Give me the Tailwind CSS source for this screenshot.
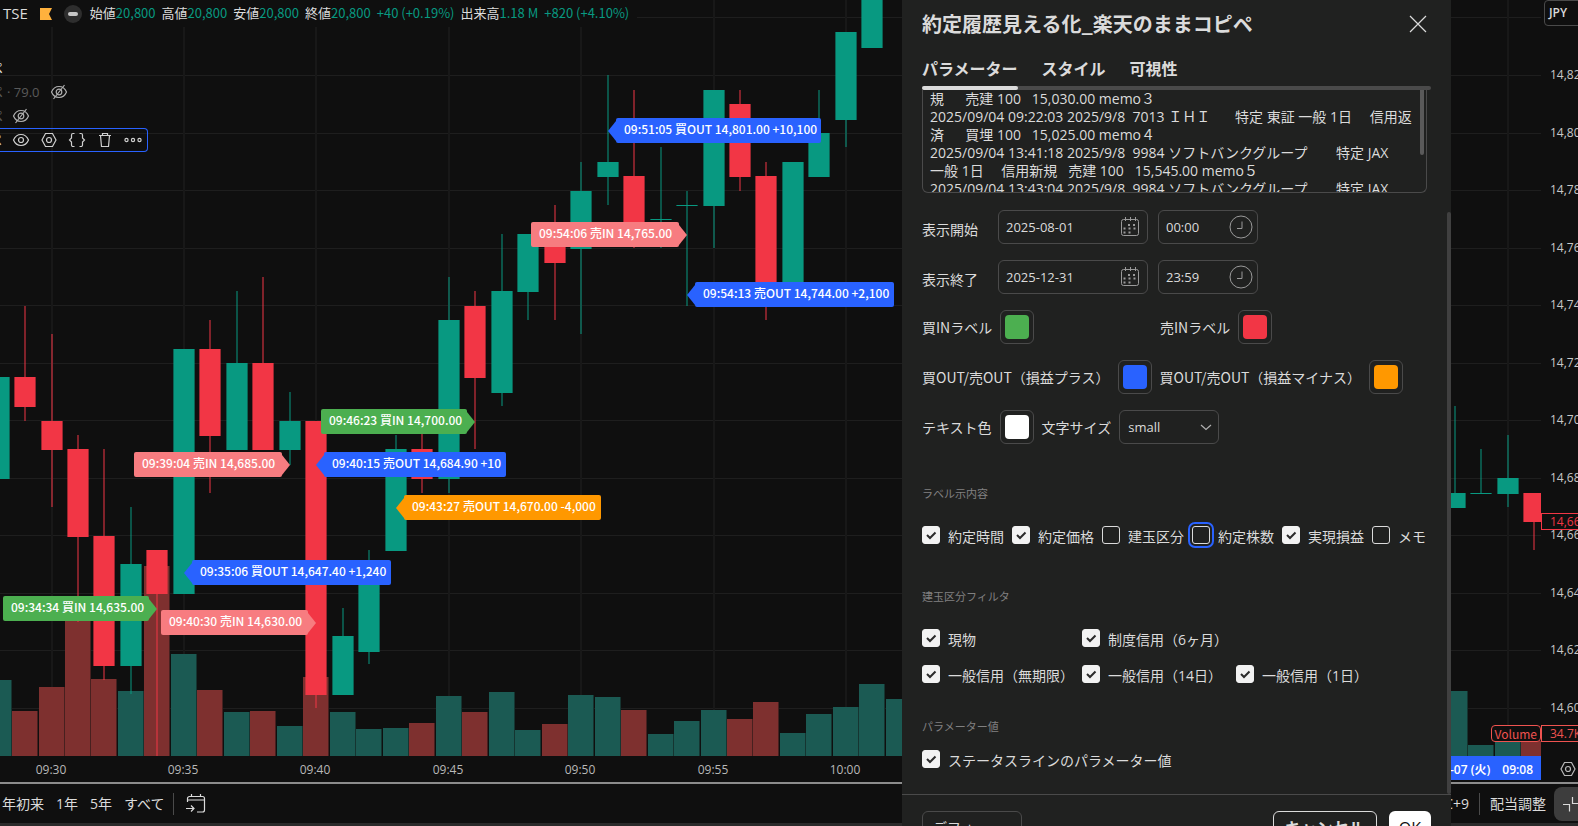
<!DOCTYPE html>
<html lang="ja">
<head>
  <meta charset="UTF-8" />
  <meta name="viewport" content="width=device-width, initial-scale=1.0"/>
  <title>チャート</title>
  <script src="https://cdn.jsdelivr.net/npm/@tailwindcss/browser@4"></script>
</head>
<body class="relative flex h-screen flex-col overflow-hidden bg-[#0f0f0f] font-['Open_Sans','Noto_Sans_CJK_JP',sans-serif] text-sm text-[#dbdbdb]">

  <!-- Chart + price axis -->
  <div class="flex min-h-0 grow">
    <main class="relative min-w-0 grow overflow-hidden">
      <svg id="chart" class="block h-full w-full font-['Noto_Sans_CJK_JP',sans-serif]"></svg>

      <!-- Legend -->
      <div class="absolute left-0 top-0 flex flex-col items-start">
        <div class="flex h-[27px] items-center bg-[#0f0f0f] pl-[3px] pr-2 text-[13px] whitespace-nowrap">
          <span class="text-[15px]">TSE</span>
          <svg class="ml-3 h-3 w-3" viewBox="0 0 12 12"><path d="M0 0h12l-3 6 3 6H0z" fill="#ffb13d"/></svg>
          <span class="ml-3 flex h-[18px] w-[18px] items-center justify-center rounded-full bg-[#2e2e2e]"><span class="h-1 w-2.5 rounded-sm bg-[#c8c8c8]"></span></span>
          <div class="ml-2 flex gap-1.5 font-['Noto_Sans_CJK_JP',sans-serif]">
            <span>始値<span class="text-[#089981]">20,800</span></span>
            <span>高値<span class="text-[#089981]">20,800</span></span>
            <span>安値<span class="text-[#089981]">20,800</span></span>
            <span>終値<span class="text-[#089981]">20,800</span></span>
            <span class="text-[#089981]">+40 (+0.19%)</span>
            <span>出来高<span class="text-[#089981]">1.18 M</span></span>
            <span class="text-[#089981]">+820 (+4.10%)</span>
          </div>
        </div>
        <div class="mt-[29px] flex h-6 items-center"><span class="flex w-[3px] justify-end overflow-hidden">ペ</span></div>
        <div class="flex h-6 items-center text-[#5a5a5a]">
          <span class="flex w-[3px] justify-end overflow-hidden">ペ</span>
          <span class="ml-1 text-[13px]">· 79.0</span>
          <button class="ml-2.5 text-[#b0b0b0]" aria-label="表示"><svg class="h-[18px] w-[18px]" viewBox="0 0 18 18" fill="none" stroke="currentColor" stroke-width="1.2"><path d="M1.5 9C3 5.500 5.500 3.500 9 3.500S15 5.500 16.500 9C15 12.500 12.500 14.500 9 14.500S3 12.500 1.500 9z"/><circle cx="9" cy="9" r="2.800"/><path d="M3.500 16 14.500 2"/></svg></button>
        </div>
        <div class="flex h-6 items-center text-[#5a5a5a]">
          <span class="flex w-[3px] justify-end overflow-hidden">ペ</span>
          <button class="ml-[9px] text-[#b0b0b0]" aria-label="表示"><svg class="h-[18px] w-[18px]" viewBox="0 0 18 18" fill="none" stroke="currentColor" stroke-width="1.2"><path d="M1.5 9C3 5.500 5.500 3.500 9 3.500S15 5.500 16.500 9C15 12.500 12.500 14.500 9 14.500S3 12.500 1.500 9z"/><circle cx="9" cy="9" r="2.800"/><path d="M3.500 16 14.500 2"/></svg></button>
        </div>
        <div class="flex h-6 items-center gap-2.5 rounded-r border border-l-0 border-[#2962ff] pr-[5px] text-[#cfcfcf]">
          <span class="flex w-[2px] justify-end overflow-hidden">ペ</span>
          <button aria-label="非表示"><svg class="h-[18px] w-[18px]" viewBox="0 0 18 18" fill="none" stroke="currentColor" stroke-width="1.2"><path d="M1.5 9C3 5.500 5.500 3.500 9 3.500S15 5.500 16.500 9C15 12.500 12.500 14.500 9 14.500S3 12.500 1.500 9z"/><circle cx="9" cy="9" r="2.500"/></svg></button>
          <button aria-label="設定"><svg class="h-[18px] w-[18px]" viewBox="0 0 18 18" fill="none" stroke="currentColor" stroke-width="1.2"><path d="M5.500 2.500h7L16 9l-3.500 6.500h-7L2 9z"/><circle cx="9" cy="9" r="2.500"/></svg></button>
          <button aria-label="ソースコード"><svg class="h-[18px] w-[18px]" viewBox="0 0 18 18" fill="none" stroke="currentColor" stroke-width="1.2"><path d="M6.500 2.500H5A1.500 1.500 0 0 0 3.500 4v3L1.500 9l2 2v3A1.500 1.500 0 0 0 5 15.500h1.500M11.500 2.500H13A1.500 1.500 0 0 1 14.500 4v3l2 2-2 2v3a1.500 1.500 0 0 1-1.500 1.500h-1.500"/></svg></button>
          <button aria-label="削除"><svg class="h-[18px] w-[18px]" viewBox="0 0 18 18" fill="none" stroke="currentColor" stroke-width="1.2"><path d="M3 4.500h12M6.500 4.500v-2h5v2M4.500 4.500l1 11h7l1-11"/></svg></button>
          <button aria-label="その他"><svg class="h-[18px] w-[18px]" viewBox="0 0 18 18" fill="none" stroke="currentColor" stroke-width="1.2"><circle cx="2.500" cy="9" r="1.600"/><circle cx="9" cy="9" r="1.600"/><circle cx="15.500" cy="9" r="1.600"/></svg></button>
        </div>
      </div>

      <span class="absolute bottom-3.5 right-0 h-[17px] rounded-sm border border-[#ef5350] bg-[#0f0f0f] px-[3px] font-['Noto_Sans_CJK_JP',sans-serif] text-xs leading-[15px] text-[#ef5350]">Volume</span>
    </main>
    <aside class="relative w-[37px] shrink-0 overflow-hidden">
      <svg id="prices" class="block h-full w-full"></svg>
      <button class="absolute left-[3px] top-0 h-[26px] w-16 rounded border border-[#4a4a4a] bg-[#0f0f0f] pl-1 text-left text-xs font-semibold">JPY</button>
      <span class="absolute left-0 top-[513px] h-[17px] w-16 border border-[#f23645] bg-[#0f0f0f] pl-2 text-xs leading-[15px] text-[#f23645]">14,665</span>
      <span class="absolute bottom-3.5 left-0 h-[17px] w-16 border border-[#ef5350] bg-[#0f0f0f] pl-2 text-xs leading-[15px] text-[#ef5350]">34.7K</span>
    </aside>
  </div>

  <!-- Time axis -->
  <div class="flex h-[26px] shrink-0 text-xs">
    <div class="relative min-w-0 grow">
      <svg id="times" class="block h-full w-full"></svg>
      <span class="absolute right-0 top-0 flex h-6 gap-3 bg-[#2962ff] pl-6 pr-2 font-semibold leading-[28px] text-white whitespace-pre"><span>2025-10-07 (火)</span><span>09:08</span></span>
    </div>
    <button class="flex w-[37px] items-center justify-center pl-4" aria-label="軸の設定"><svg class="h-4 w-4 text-[#b8b8b8]" viewBox="0 0 16 16" fill="none" stroke="currentColor" stroke-width="1.200"><path d="M4.500 1.500h7L15 8l-3.500 6.500h-7L1 8z"/><circle cx="8" cy="8" r="2.500"/></svg></button>
  </div>

  <!-- Bottom toolbar -->
  <div class="flex h-[44px] shrink-0 items-center overflow-hidden border-t-2 border-b-3 border-t-[#8c8c8c] border-b-[#2a2a2a] pl-0.5">
    <button>年初来</button>
    <button class="ml-3">1年</button>
    <button class="ml-3">5年</button>
    <button class="ml-3">すべて</button>
    <span class="ml-2 h-[22px] w-px bg-[#4a4a4a]"></span>
    <button class="ml-3" aria-label="移動"><svg class="h-5 w-5" viewBox="0 0 20 20" fill="none" stroke="currentColor" stroke-width="1.200"><path d="M1.500 8V4.500a2 2 0 0 1 2-2h13a2 2 0 0 1 2 2V16a2 2 0 0 1-2 2H11M1.500 6h17M5.500 0v3M14.500 0v3M0 14.500h8M5 11.500l3 3-3 3"/></svg></button>
    <div class="ml-auto flex items-center">
      <button>UTC+9</button>
      <span class="ml-2.5 h-[22px] w-px bg-[#4a4a4a]"></span>
      <button class="ml-2.5">配当調整</button>
      <button class="ml-2 flex h-[34px] w-6 items-center justify-end rounded-l-lg bg-[#3d3d3d]" aria-label="スケール"><svg class="h-[18px] w-4" viewBox="0 0 16 18" fill="none" stroke="currentColor" stroke-width="1.200"><path d="M1 9.500h6.500v7M10.500 2v6.500H16"/></svg></button>
    </div>
  </div>

  <!-- Settings dialog -->
  <div role="dialog" aria-labelledby="dialogTitle" class="absolute right-[127px] top-0 w-[549px] bg-[#202120]">
    <div class="flex h-[52px] items-center justify-between pb-1 pl-5 pr-6">
      <h2 id="dialogTitle" class="font-['Noto_Sans_CJK_JP',sans-serif] text-xl font-bold">約定履歴見える化_楽天のままコピペ</h2>
      <button aria-label="閉じる"><svg class="h-[18px] w-[18px]" viewBox="0 0 18 18" fill="none" stroke="currentColor" stroke-width="1.200"><path d="M1 1l16 16M17 1L1 17"/></svg></button>
    </div>
    <div class="px-5">
      <div class="flex gap-6 text-base font-bold">
        <button class="relative h-[38px] pb-1 after:absolute after:inset-x-0 after:bottom-0 after:z-10 after:h-1 after:rounded-full after:bg-[#dbdbdb]">パラメーター</button>
        <button class="h-[38px] pb-1">スタイル</button>
        <button class="h-[38px] pb-1">可視性</button>
      </div>
      <div class="-mt-1 h-1 rounded-full bg-[#4a4a4a]"></div>
    </div>

    <div class="relative pl-5 pr-6">
      <textarea aria-label="約定履歴" spellcheck="false" class="block h-[103px] w-full resize-none overflow-hidden rounded-b-md border border-t-0 border-[#4a4a4a] bg-transparent px-[7px] text-sm leading-[18px] whitespace-pre">
規　  売建 100   15,030.00 memo３
2025/09/04 09:22:03 2025/9/8  7013 ＩＨＩ　   特定 東証 一般 1日　 信用返
済　  買埋 100   15,025.00 memo４
2025/09/04 13:41:18 2025/9/8  9984 ソフトバンクグループ　    特定 JAX
一般 1日　 信用新規   売建 100   15,545.00 memo５
2025/09/04 13:43:04 2025/9/8  9984 ソフトバンクグループ　    特定 JAX</textarea>
      <span class="absolute right-[27px] top-0 h-[65px] w-1 rounded-b bg-[#5a5a5a]"></span>
    </div>
    <span class="absolute right-0 top-[212px] h-[582px] w-1 rounded bg-[#404040]"></span>

    <div class="mt-[17px] flex flex-col gap-4 px-5 font-['Noto_Sans_CJK_JP',sans-serif]">
      <div class="flex h-[34px] items-center">
        <label for="startDate" class="w-[76px] pt-1">表示開始</label>
        <div class="flex h-[34px] w-[150px] items-center rounded-md border border-[#4a4a4a] px-[7px]">
          <input id="startDate" value="2025-08-01" class="min-w-0 grow bg-transparent font-['Open_Sans',sans-serif] text-[13px] font-medium outline-none"/>
          <svg class="h-5 w-5 shrink-0 text-[#9a9a9a]" viewBox="0 0 20 20" fill="none" stroke="currentColor"><rect x="1.500" y="2.500" width="17" height="16" rx="2"/><path d="M5.500 0v4M10.500 0v4M15.500 0v4"/><path d="M8 8h8M3.500 11.500h12.500M3.500 15.500h8" stroke-width="2" stroke-dasharray="2 3"/></svg>
        </div>
        <div class="ml-2.5 flex h-[34px] w-[100px] items-center rounded-md border border-[#4a4a4a] pl-[7px] pr-1">
          <input aria-label="開始時刻" value="00:00" class="min-w-0 grow bg-transparent font-['Open_Sans',sans-serif] text-[13px] font-medium outline-none"/>
          <svg class="h-6 w-6 shrink-0 text-[#9a9a9a]" viewBox="0 0 24 24" fill="none" stroke="currentColor"><circle cx="12" cy="12" r="11"/><path d="M13 6.500v7H8"/></svg>
        </div>
      </div>
      <div class="flex h-[34px] items-center">
        <label for="endDate" class="w-[76px] pt-1">表示終了</label>
        <div class="flex h-[34px] w-[150px] items-center rounded-md border border-[#4a4a4a] px-[7px]">
          <input id="endDate" value="2025-12-31" class="min-w-0 grow bg-transparent font-['Open_Sans',sans-serif] text-[13px] font-medium outline-none"/>
          <svg class="h-5 w-5 shrink-0 text-[#9a9a9a]" viewBox="0 0 20 20" fill="none" stroke="currentColor"><rect x="1.500" y="2.500" width="17" height="16" rx="2"/><path d="M5.500 0v4M10.500 0v4M15.500 0v4"/><path d="M8 8h8M3.500 11.500h12.500M3.500 15.500h8" stroke-width="2" stroke-dasharray="2 3"/></svg>
        </div>
        <div class="ml-2.5 flex h-[34px] w-[100px] items-center rounded-md border border-[#4a4a4a] pl-[7px] pr-1">
          <input aria-label="終了時刻" value="23:59" class="min-w-0 grow bg-transparent font-['Open_Sans',sans-serif] text-[13px] font-medium outline-none"/>
          <svg class="h-6 w-6 shrink-0 text-[#9a9a9a]" viewBox="0 0 24 24" fill="none" stroke="currentColor"><circle cx="12" cy="12" r="11"/><path d="M13 6.500v7H8"/></svg>
        </div>
      </div>
      <div class="flex h-[34px] items-center">
        <div class="flex w-[238px] items-center gap-2">
          <span>買INラベル</span>
          <button aria-label="買INラベルの色" class="h-[34px] w-[34px] rounded-md border border-[#4a4a4a] p-1"><span class="block h-6 w-6 rounded bg-[#4caf50]"></span></button>
        </div>
        <div class="flex items-center gap-2">
          <span>売INラベル</span>
          <button aria-label="売INラベルの色" class="h-[34px] w-[34px] rounded-md border border-[#4a4a4a] p-1"><span class="block h-6 w-6 rounded bg-[#f23645]"></span></button>
        </div>
      </div>
      <div class="flex h-[34px] items-center gap-2">
        <span>買OUT/売OUT（損益プラス）</span>
        <button aria-label="損益プラスの色" class="h-[34px] w-[34px] rounded-md border border-[#4a4a4a] p-1"><span class="block h-6 w-6 rounded bg-[#2962ff]"></span></button>
        <span>買OUT/売OUT（損益マイナス）</span>
        <button aria-label="損益マイナスの色" class="h-[34px] w-[34px] rounded-md border border-[#4a4a4a] p-1"><span class="block h-6 w-6 rounded bg-[#ff9800]"></span></button>
      </div>
      <div class="flex h-[34px] items-center gap-2">
        <span>テキスト色</span>
        <button aria-label="テキスト色" class="h-[34px] w-[34px] rounded-md border border-[#4a4a4a] p-1"><span class="block h-6 w-6 rounded bg-white"></span></button>
        <label for="textSize">文字サイズ</label>
        <div class="grid w-[100px] items-center">
          <select id="textSize" class="h-[34px] appearance-none rounded-md border border-[#4a4a4a] bg-[#202120] px-2 font-['Open_Sans',sans-serif] text-[13px] font-medium [grid-area:1/1]"><option>small</option><option>normal</option><option>large</option></select>
          <svg class="pointer-events-none mr-[7px] h-3 w-3 justify-self-end text-[#b0b0b0] [grid-area:1/1]" viewBox="0 0 12 12" fill="none" stroke="currentColor" stroke-width="1.200"><path d="M1 4l5 4.500L11 4"/></svg>
        </div>
      </div>
    </div>

    <div class="px-5 leading-[22px]">
      <h3 class="mt-[42px] text-[11px] leading-4 text-[#808080]">ラベル示内容</h3>
      <div class="mt-6 flex gap-2 whitespace-nowrap" id="labelOptions"></div>

      <h3 class="mt-[41px] text-[11px] leading-4 text-[#808080]">建玉区分フィルタ</h3>
      <div class="mt-6 grid grid-cols-[auto_auto_auto] justify-start gap-x-2 gap-y-3.5 whitespace-nowrap" id="filterOptions"></div>

      <h3 class="mt-8 text-[11px] leading-4 text-[#808080]">パラメーター値</h3>
      <div class="mt-[15px]" id="statusOptions"></div>
    </div>

    <div class="mt-[22px] flex gap-3 border-t border-[#4a4a4a] px-5 py-4">
      <button class="mr-auto h-[34px] w-[100px] rounded-md border border-[#4a4a4a] px-2.5 text-left">デフォ…</button>
      <button class="h-[34px] rounded-md border border-[#dbdbdb] px-[11px] text-base font-semibold">キャンセル</button>
      <button class="h-[34px] rounded-md bg-white px-2.5 text-base text-[#0f0f0f]">OK</button>
    </div>
  </div>

  <script>
    const UP = "#089981", DOWN = "#f23645";
    const STEP = 26.48, ORIGIN = 51.5;
    const cx = i => Math.round(ORIGIN + STEP * i);

    // [index, body top, body bottom, wick top, wick bottom, up, volume top]
    const candles = [
      [-2, 377, 479, 377, 479, 1, 680], [-1, 377, 407, 306, 421, 0, 711], [0, 421, 450, 334, 507, 0, 687],
      [1, 449, 537, 435, 622, 0, 612], [2, 536, 666, 449, 680, 0, 679], [3, 564, 666, 507, 694, 1, 691],
      [4, 550, 594, 550, 756, 0, 566], [5, 349, 594, 349, 594, 1, 654], [6, 349, 436, 320, 493, 0, 690],
      [7, 363, 450, 291, 450, 1, 712], [8, 363, 450, 277, 450, 0, 711], [9, 421, 450, 392, 465, 1, 726],
      [10, 421, 695, 421, 708, 0, 677], [11, 636, 695, 608, 695, 1, 712], [12, 579, 652, 550, 664, 1, 729],
      [13, 449, 551, 435, 551, 1, 728], [14, 449, 479, 430, 493, 0, 723], [15, 320, 479, 277, 493, 1, 696],
      [16, 306, 378, 291, 449, 0, 712], [17, 291, 393, 234, 406, 1, 692], [18, 234, 292, 234, 320, 1, 730],
      [19, 234, 263, 205, 320, 0, 724], [20, 191, 249, 162, 334, 1, 695], [21, 162, 177, 75, 205, 1, 697],
      [22, 176, 234, 90, 248, 0, 710], [23, 219, 220, 147, 248, 1, 734], [24, 205, 206, 191, 306, 1, 721],
      [25, 90, 206, 90, 248, 1, 710], [26, 104, 177, 90, 191, 0, 719], [27, 176, 292, 162, 320, 0, 702],
      [28, 162, 292, 162, 292, 1, 733], [29, 133, 177, 90, 177, 1, 714], [30, 32, 120, 32, 147, 1, 707],
      [31, -10, 48, -10, 48, 1, 684], [32, -20, -10, -20, -10, 1, 699],
      [53, 493, 508, 406, 508, 1, 691], [54, 493, 494, 449, 494, 1, 745], [55, 478, 494, 435, 507, 1, 741],
      [56, 493, 522, 493, 550, 0, 741],
    ];

    // [tip x, top, far edge, colour, text]
    const tags = [
      [608, 118, 821, "#2962ff", "09:51:05 買OUT 14,801.00 +10,100"],
      [687, 222, 531, "#f77c80", "09:54:06 売IN 14,765.00"],
      [687, 282, 894, "#2962ff", "09:54:13 売OUT 14,744.00 +2,100"],
      [475, 409, 321, "#4caf50", "09:46:23 買IN 14,700.00"],
      [290, 452, 134, "#f77c80", "09:39:04 売IN 14,685.00"],
      [316, 452, 506, "#2962ff", "09:40:15 売OUT 14,684.90 +10"],
      [396, 495, 601, "#ff9800", "09:43:27 売OUT 14,670.00 -4,000"],
      [184, 560, 391, "#2962ff", "09:35:06 買OUT 14,647.40 +1,240"],
      [157, 596, 3, "#4caf50", "09:34:34 買IN 14,635.00"],
      [316, 610, 161, "#f77c80", "09:40:30 売IN 14,630.00"],
    ];

    let svg = "";
    for (let k = -1; k < 12; k++) svg += `<rect x="0" y="${Math.round(75 + 57.53 * k)}" width="100%" height="1" fill="#1e1e1e"/>`;
    for (let i = 0; i <= 55; i += 5) svg += `<rect x="${cx(i) - 1}" y="0" width="2" height="100%" fill="#181818"/>`;
    for (const [i, , , , , up, vol] of candles) {
      svg += `<rect x="${cx(i) - 13}" y="${vol}" width="26" height="${756 - vol}" fill="${up ? "#1b5a53" : "#7e302f"}"/>`;
      svg += `<rect x="${cx(i) + 12}" y="${vol}" width="1" height="${756 - vol}" fill="#0f0f0f" fill-opacity="0.5"/>`;
    }
    for (const [i, top, bottom, high, low, up] of candles) {
      const fill = up ? UP : DOWN;
      svg += `<rect x="${cx(i) - 1}" y="${high}" width="2" height="${low - high}" fill="${fill}" fill-opacity="0.5"/>`;
      svg += `<rect x="${cx(i) - 11}" y="${top}" width="22" height="${bottom - top}" fill="${fill}" fill-opacity="0.6"/>`;
      svg += `<rect x="${cx(i) - 10}" y="${top}" width="20" height="${bottom - top}" fill="${fill}"/>`;
    }
    for (const [tip, top, edge, fill, text] of tags) {
      const right = edge > tip;
      const base = right ? tip + 8 : tip - 8;
      svg += `<rect x="${Math.min(base, edge)}" y="${top}" width="${Math.abs(edge - base)}" height="25" rx="2" fill="${fill}"/>`;
      svg += `<path d="M${tip} ${top + 13}L${base} ${top + 3}v20z" fill="${fill}"/>`;
      svg += `<text x="${(right ? base : edge) + 8}" y="${top + 16}" font-size="12" font-weight="500" fill="#fff">${text}</text>`;
    }
    document.getElementById("chart").innerHTML = svg;

    let prices = "";
    for (let k = 0; k < 12; k++) {
      prices += `<text x="9" y="${Math.round(79 + 57.53 * k)}" font-size="12" fill="#c8c8c8">14,${820 - 20 * k}</text>`;
    }
    document.getElementById("prices").innerHTML = prices;

    let times = "";
    ["09:30", "09:35", "09:40", "09:45", "09:50", "09:55", "10:00"].forEach((t, n) => {
      times += `<text x="${cx(n * 5) - 1}" y="18" font-size="12" text-anchor="middle" fill="#b8b8b8">${t}</text>`;
    });
    document.getElementById("times").innerHTML = times;

    const checkbox = ([text, checked, focus]) => `
      <label class="flex items-start gap-2">
        <span class="grid shrink-0">
          <input type="checkbox" ${checked ? "checked" : ""} class="peer h-[18px] w-[18px] appearance-none rounded-[3px] border border-[#dbdbdb] [grid-area:1/1] checked:border-[#f2f2f2] checked:bg-[#f2f2f2] ${focus ? "outline-2 outline-offset-2 outline-[#2962ff]" : ""}"/>
          <svg class="pointer-events-none hidden h-[18px] w-[18px] [grid-area:1/1] peer-checked:block" viewBox="0 0 18 18" fill="none" stroke="#2a2a2a" stroke-width="2"><path d="M5 9l3 3 5.500-5.500"/></svg>
        </span>
        <span>${text}</span>
      </label>`;

    document.getElementById("labelOptions").innerHTML = [
      ["約定時間", true], ["約定価格", true], ["建玉区分", false], ["約定株数", false, true], ["実現損益", true], ["メモ", false],
    ].map(checkbox).join("");
    document.getElementById("filterOptions").innerHTML =
      checkbox(["現物", true]) + checkbox(["制度信用（6ヶ月）", true]) + "<span></span>" +
      [["一般信用（無期限）", true], ["一般信用（14日）", true], ["一般信用（1日）", true]].map(checkbox).join("");
    document.getElementById("statusOptions").innerHTML = checkbox(["ステータスラインのパラメーター値", true]);
  </script>
</body>
</html>
